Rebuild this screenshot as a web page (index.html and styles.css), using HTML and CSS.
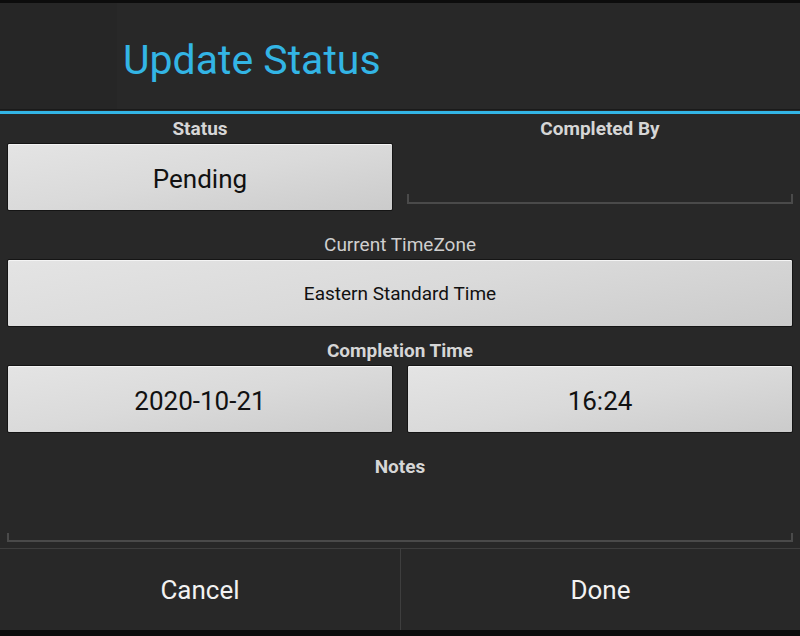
FILE: index.html
```html
<!DOCTYPE html>
<html>
<head>
<meta charset="utf-8">
<link rel="stylesheet" href="styles.css">
</head>
<body>
<div class="dialog">
  <div class="title-bar">
    <div class="icon-slot"></div>
    <h1 class="title">Update Status</h1>
  </div>
  <div class="title-rule"></div>
  <div class="content">
    <div class="pair">
      <div class="col">
        <div class="label bold">Status</div>
        <div class="btn">Pending</div>
      </div>
      <div class="col">
        <div class="label bold">Completed By</div>
        <div class="edit short"></div>
      </div>
    </div>
    <div class="label tz">Current TimeZone</div>
    <div class="btn small">Eastern Standard Time</div>
    <div class="label bold ct">Completion Time</div>
    <div class="pair">
      <div class="btn">2020-10-21</div>
      <div class="btn">16:24</div>
    </div>
    <div class="label bold notes">Notes</div>
    <div class="edit tall"></div>
  </div>
  <div class="actions">
    <div class="action">Cancel</div>
    <div class="action">Done</div>
  </div>
</div>
</body>
</html>
```
FILE: styles.css
```css
html, body {
  margin: 0;
  padding: 0;
  background: #0c0c0c;
}
body {
  width: 800px;
  height: 636px;
  overflow: hidden;
  font-family: Roboto, "Liberation Sans", sans-serif;
}
.dialog {
  margin-top: 3px;
  height: 627px;
  background: #282828;
  display: flex;
  flex-direction: column;
}
.title-bar {
  height: 107px;
  display: flex;
  align-items: stretch;
  border-bottom: 1px solid #1a1a1a;
  box-sizing: border-box;
}
.icon-slot {
  width: 117px;
  background: #262626;
}
.title {
  margin: 0;
  padding-left: 6px;
  padding-top: 8px;
  font-weight: 400;
  font-size: 41px;
  color: #33b5e5;
  line-height: 98px;
}
.title-rule {
  height: 3px;
  background: #33b5e5;
  margin-top: 1px;
}
.content {
  padding: 0 7px;
  height: 434px;
  box-sizing: border-box;
  display: flex;
  flex-direction: column;
}
.pair {
  display: grid;
  grid-template-columns: 1fr 1fr;
  column-gap: 14px;
}
.col {
  display: flex;
  flex-direction: column;
}
.label {
  text-align: center;
  font-size: 19px;
  line-height: 29px;
  height: 29px;
  color: #d6d6d6;
}
.bold {
  font-weight: 700;
}
.tz {
  margin-top: 19px;
  font-weight: 400;
  color: #cfcfcf;
}
.ct {
  margin-top: 9px;
}
.notes {
  margin-top: 19px;
}
.btn {
  height: 68px;
  box-sizing: border-box;
  border: 1px solid #151515;
  border-radius: 2px;
  background: linear-gradient(170deg, #e4e4e4 0%, #dadada 50%, #cbcbcb 100%);
  box-shadow: inset 0 1px 0 #f4f4f4;
  display: flex;
  align-items: center;
  justify-content: center;
  padding-top: 3px;
  font-size: 26px;
  color: #111;
}
.btn.small {
  font-size: 19px;
  padding-top: 1px;
}
.edit {
  box-sizing: border-box;
  border: 2px solid #4a4a4a;
  border-top: none;
  border-radius: 0;
}
.edit.short {
  height: 61px;
  border-image: linear-gradient(to bottom, transparent 52px, #4a4a4a 52px) 1;
}
.edit.tall {
  height: 61px;
  border-image: linear-gradient(to bottom, transparent 53px, #4a4a4a 53px) 1;
}
.actions {
  border-top: 1px solid #3e3e3e;
  flex: 1;
  display: grid;
  grid-template-columns: 1fr 1fr;
}
.action {
  display: flex;
  align-items: center;
  justify-content: center;
  font-size: 26px;
  color: #f2f2f2;
}
.action + .action {
  border-left: 1px solid #3e3e3e;
}
```
